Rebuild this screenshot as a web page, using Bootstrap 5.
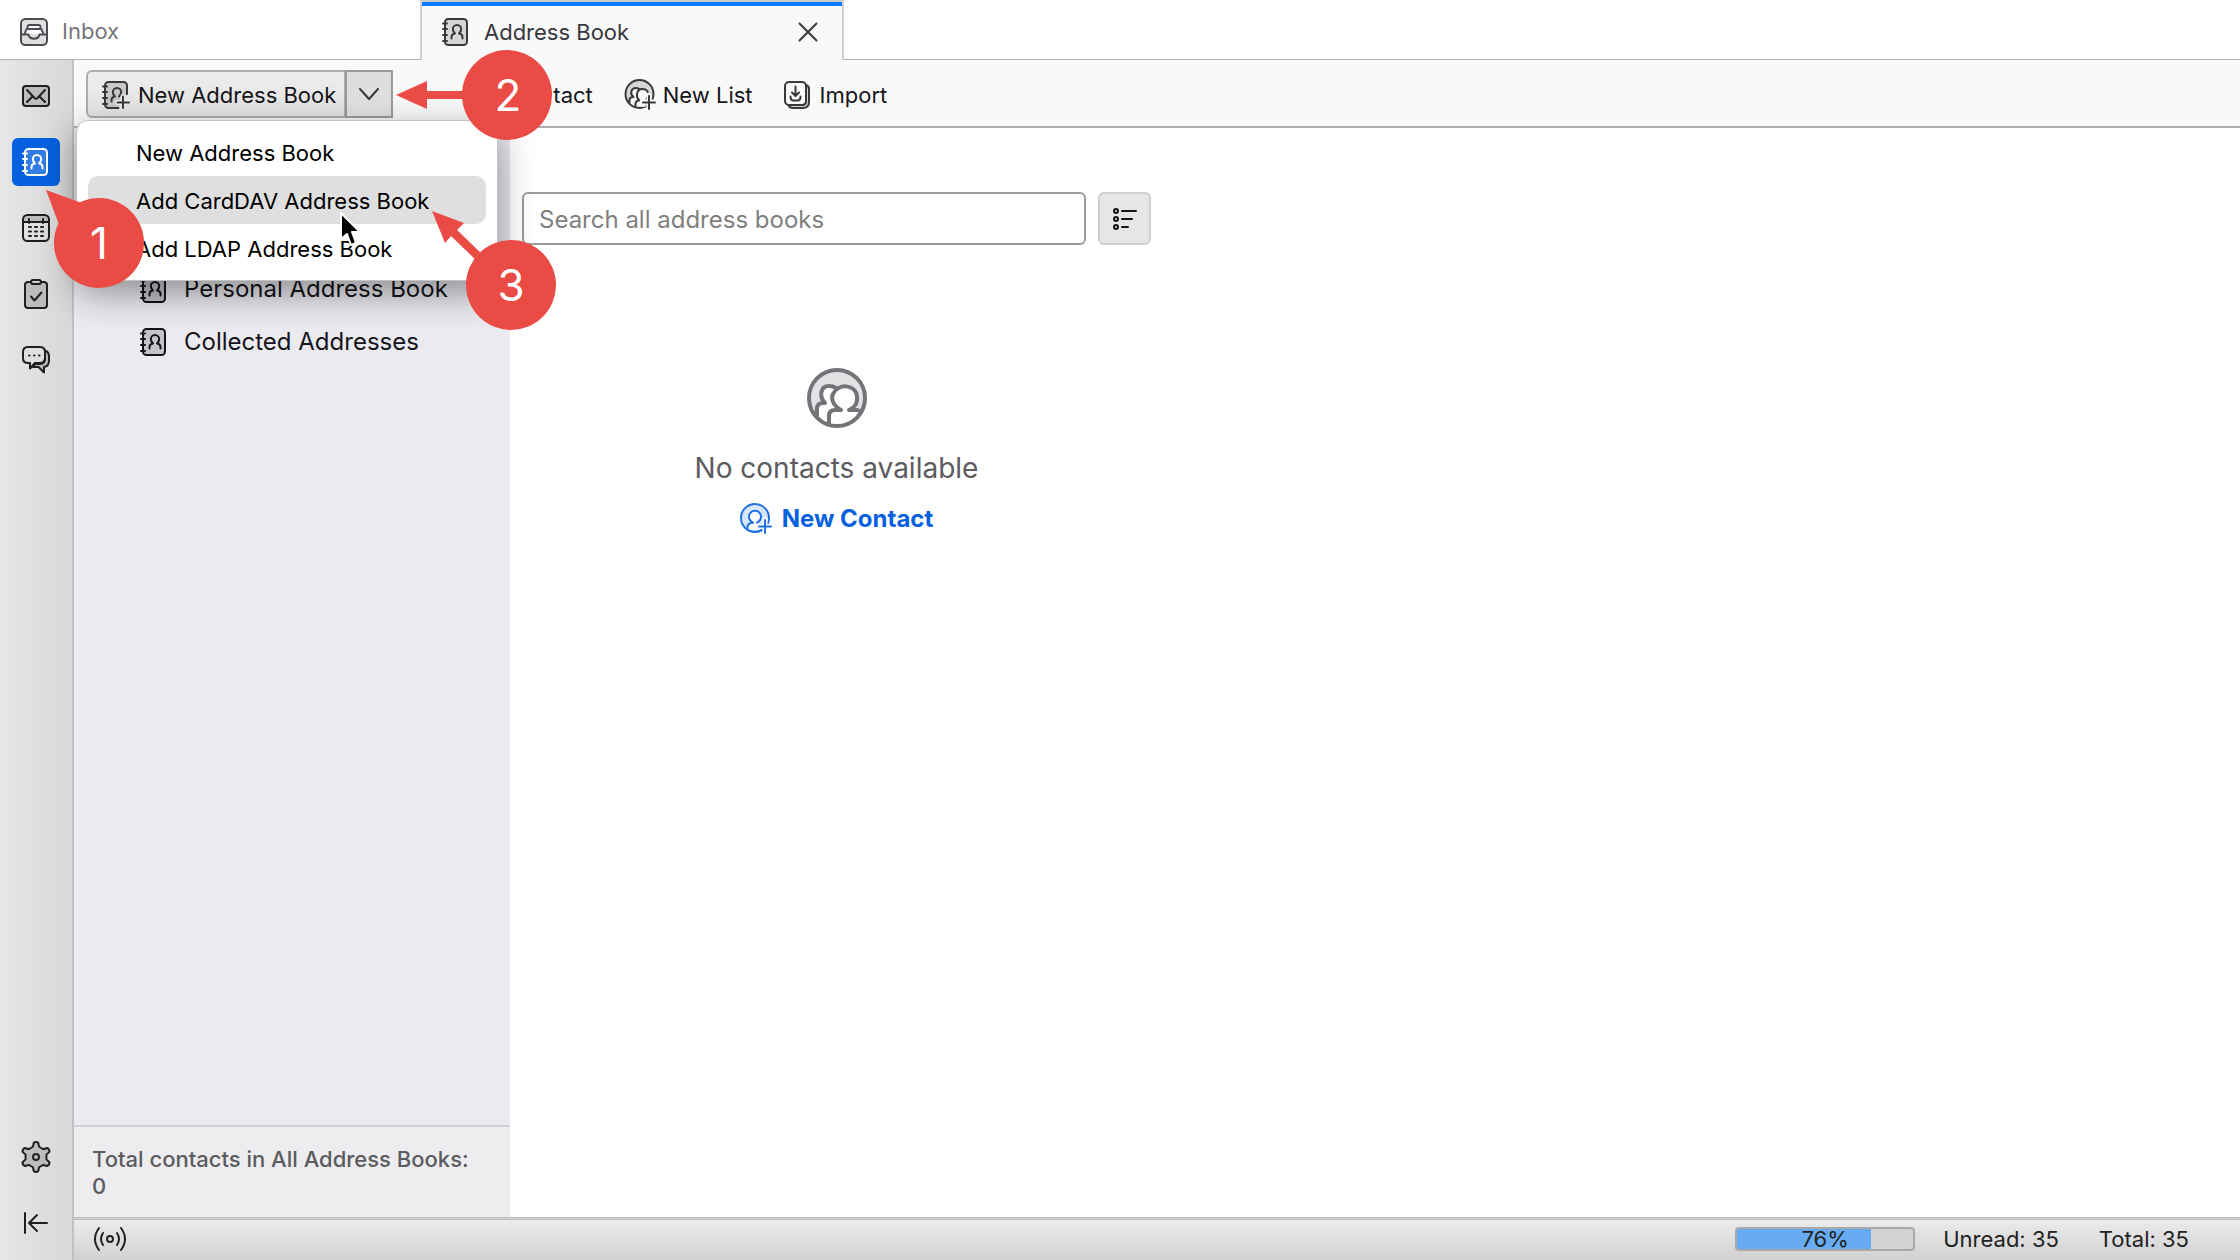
<!DOCTYPE html>
<html lang="en">
<head>
<meta charset="utf-8">
<meta name="viewport" content="width=device-width, initial-scale=1">
<title>Address Book</title>
<link href="https://cdn.jsdelivr.net/npm/bootstrap@5.3.0/dist/css/bootstrap.min.css" rel="stylesheet">
<style>
  body { font-family: Inter, "Liberation Sans", sans-serif; font-size: 22px; line-height: 27px; color: #15141a; background: #fff; overflow: hidden; }
  svg { display: block; flex: none; fill: none; stroke: currentColor; stroke-width: 2; stroke-linecap: round; stroke-linejoin: round; }
  button { color: inherit; }
  .shade { fill: currentColor; fill-opacity: .18; }
  .tab-strip { height: 60px; }
  .tab-item { width: 422px; padding: 4px 20px 0; border-bottom: 1px solid #b3b3b3; border-right: 2px solid #ccc; color: #75757a; gap: 14px; background: #fff; }
  .tab-item svg { color: #4b4b52; }
  .tab-item.is-active { background: #f9f9f9; border-top: 2px solid #ccc; border-bottom: 0; color: #38383d; position: relative; padding-top: 2px; gap: 14px; }
  .tab-item.is-active::before { content: ""; position: absolute; left: 0; right: 0; top: 0; height: 4px; background: #0a78ff; }
  .tab-item.is-active svg { color: #38383d; }
  .tab-rest { border-bottom: 1px solid #b3b3b3; }
  .plain-btn { background: none; border: 0; padding: 0; }
  .rail { width: 74px; padding: 12px 0 13px; background: linear-gradient(90deg, #e6e6e6, #d8d8d8); border-right: 2px solid #c1c1c1; gap: 18px; }
  .rail button { width: 48px; height: 48px; border-radius: 6px; color: #1f1f22; }
  .rail button.is-active { background: #0561e0; color: #fff; }
  .rail .is-active .shade { fill-opacity: .25; }
  .tool-strip { height: 68px; padding: 2px 12px 0; background: #f9f9f9; border-bottom: 2px solid #adadad; }
  .tool-strip svg { color: #38383d; }
  .split-btn .btn { height: 48px; border: 2px solid #adadad; font-size: 22px; line-height: 27px; color: #15141a; background: linear-gradient(#ededed, #e3e3e3); border-radius: 6px; }
  .split-btn .btn-main { padding: 2px 8px 0 14px; gap: 8px; border-top-right-radius: 0; border-bottom-right-radius: 0; }
  .split-btn .btn-open { width: 48px; padding: 0; border-color: #9b9b9b; background: linear-gradient(#dcdcdc, #e2e2e2); border-top-left-radius: 0; border-bottom-left-radius: 0; }
  .split-btn .dropdown-menu { top: 50px; left: -10px; width: 422px; padding: 7px 11px 8px; border: 1px solid #c4c4c4; border-radius: 12px; font-size: 22px; box-shadow: 0 12px 36px rgba(0,0,0,.4); }
  .split-btn .dropdown-item { height: 48px; padding: 0 48px; line-height: 50px; border-radius: 10px; color: #000; }
  .split-btn .dropdown-item.is-hover { background: #dfdfdf; }
  .tool-group { margin-left: 160px; gap: 31px; padding-top: 2px; }
  .tool-group button { gap: 7px; }
  .tool-group button + button + button { gap: 8px; }
  .book-pane { width: 436px; background: #eaeaef; }
  .book-list { padding: 134px 0 0 66px; font-size: 24px; }
  .book-list a { height: 53px; gap: 16px; color: #15141a; }
  .book-list svg { color: #15141a; }
  .book-total { height: 92px; padding: 19px 36px 0 18px; background: #ededef; border-top: 2px solid #d1d1d5; color: #5b5b60; font-weight: 500; }
  .list-pane { width: 653px; padding: 64px 12px 0; }
  .search-box { height: 53px; border: 2px solid #9b9b9b; border-radius: 6px; padding: 2px 15px 0; font-size: 24px; }
  .search-box::placeholder { color: #7f7f80; }
  .view-btn { width: 53px; height: 53px; background: #e6e6e6; border: 2px solid #cfcfcf; border-radius: 6px; }
  .empty-note { padding-top: 123px; color: #5b5b60; }
  .empty-note svg { color: #737378; }
  .empty-note p { font-size: 28px; line-height: 34px; margin: 23px 0 17px; }
  .empty-note .new-link { font-size: 24px; line-height: 34px; font-weight: 700; color: #0561e0; gap: 10px; }
  .empty-note .new-link svg { color: #1f72e3; }
  .status-strip { height: 43px; padding: 0 51px 2px 19px; background: linear-gradient(#ebebeb, #d1d1d1); border-top: 3px double #bdbdbd; gap: 40px; color: #222; }
  .quota { width: 180px; height: 24px; border: 2px solid #a9a9a9; border-radius: 4px; background: #d2d2d2; position: relative; margin-right: -12px; }
  .quota .progress-bar { background: #67abf3; }
  .quota span { position: absolute; inset: 0; text-align: center; line-height: 21px; color: #222; font-size: 22px; }
  .callouts { position: absolute; left: 0; top: 0; z-index: 1100; pointer-events: none; stroke: none; fill: #ea4b45; }
  .callouts text { fill: #fff; font: 44px Inter, "Liberation Sans", sans-serif; text-anchor: middle; }
</style>
</head>
<body class="vh-100 d-flex flex-column position-relative">

<svg width="0" height="0" class="position-absolute" aria-hidden="true">
  <defs>
    <symbol id="i-book" viewBox="0 0 28 28">
      <rect class="shade" x="3" y="1" width="22" height="26" rx="3.5"/>
      <path d="M1 5.5h4M1 11h4M1 17h4M1 23h4"/>
      <path d="M9.500 20.500v-1.500c0-2.500 1.200-3.300 3.500-3.600-1.500-1.300-2.200-2.700-2.200-4.300a4.200 4.200 0 0 1 8.400 0c0 1.600-.7 3-2.200 4.300 2.300.3 3.500 1.100 3.500 3.600v1.500"/>
    </symbol>
    <symbol id="i-book-add" viewBox="0 0 28 28">
      <path class="shade" d="M3 4.500a3.500 3.500 0 0 1 3.500-3.500h15a3.500 3.500 0 0 1 3.500 3.500v10l-8 7v5.500h-10.500a3.500 3.500 0 0 1-3.500-3.500z" stroke="none"/>
      <path d="M25 13V4.500a3.500 3.500 0 0 0-3.500-3.500h-15a3.500 3.500 0 0 0-3.500 3.500v19a3.500 3.500 0 0 0 3.500 3.500h10"/>
      <path d="M1 5.500h4M1 11h4M1 17h4M1 23h4"/>
      <path d="M9.500 20.500v-1.500c0-2.500 1.200-3.300 3.500-3.600-1.500-1.300-2.200-2.700-2.200-4.300a4.200 4.200 0 0 1 8.400 0c0 1.600-.7 3-2.200 4.300"/>
      <path d="M21 15.500v12M15 21.500h12" stroke="#ebebeb" stroke-width="5"/>
      <path d="M21 15.500v11.500M15.500 21.500h11.500"/>
    </symbol>
    <symbol id="i-person-add" viewBox="0 0 32 32">
      <circle class="shade" cx="15" cy="15" r="14"/>
      <path fill="#fff" d="M7 26.500v-2.500c0-3 2-4 6-4.300-3-1.700-4-3.700-4-5.900a6 6 0 0 1 12 0c0 2.200-1 4.200-4 5.900l3 .5v8z" stroke="none"/>
      <path d="M7.500 26v-2c0-3 2-4 5.500-4.300-3-1.700-4-3.700-4-5.900a6 6 0 0 1 12 0c0 2.200-1 4.200-4 5.900M7 26.500q7 4.500 15 .5"/>
      <path d="M25 17v14M18 23.500h14" stroke="#fff" stroke-width="5"/>
      <path d="M25 17v13M19 23.500h12"/>
    </symbol>
    <symbol id="i-people-add" viewBox="0 0 32 32">
      <circle class="shade" cx="15.500" cy="15" r="14"/>
      <path fill="#f9f9f9" d="M6 24v-2c0-3 1-4 4-4-4-4-2-9 2-9 2 0 3 1 4 2 3-3 8-2 8.500 3 .2 3-1 4-3 6v8l-10-1z" stroke="none"/>
      <path d="M5.500 24v-3c0-2 1-3 4-3-4.500-4-1.800-9 2.500-9 1 0 2 .3 3 .8M11.500 28v-3c0-2.500 1-3.500 4-3.500-4-3-3.500-11.500 3-11.500s7 7 4 10.500"/>
      <path d="M25 16v14M18 23h14" stroke="#f9f9f9" stroke-width="5"/>
      <path d="M25 17v13M19 23.500h12"/>
    </symbol>
  </defs>
</svg>

<header class="tab-strip d-flex">
  <a href="#" class="tab-item d-flex align-items-center text-decoration-none">
    <svg width="28" height="28" viewBox="0 0 28 28"><rect class="shade" x="1" y="1" width="26" height="26" rx="4.500"/><path fill="#fff" stroke="none" d="M5 16l1.500-8 3-1.500h9l3 1.500 1.500 8z"/><path d="M2 16.500h6.500c1 5.500 10 5.500 11 0h6.500M5 15l1.500-4h15l1.500 4M7.500 10.500V9c0-1.200.8-2 2-2h9c1.200 0 2 .8 2 2v1.500"/></svg>
    <span>Inbox</span>
  </a>
  <div class="tab-item is-active d-flex align-items-center">
    <svg width="28" height="28"><use href="#i-book"/></svg>
    <span class="flex-grow-1">Address Book</span>
    <button type="button" class="plain-btn me-1" aria-label="Close tab"><svg width="20" height="20" viewBox="0 0 20 20"><path d="M1.500 1.500l17 17M18.500 1.500l-17 17"/></svg></button>
  </div>
  <div class="tab-rest flex-grow-1"></div>
</header>

<div class="d-flex flex-grow-1">
  <nav class="rail d-flex flex-column align-items-center" aria-label="Spaces">
    <button type="button" class="plain-btn d-flex align-items-center justify-content-center" aria-label="Mail"><svg width="28" height="22" viewBox="0 0 28 22"><rect class="shade" x="1" y="1" width="26" height="20" rx="3"/><path d="M5 5l7.500 8c1 1 2 1 3 0l7.500-8M5 17l5-5M23 17l-5-5"/></svg></button>
    <button type="button" class="plain-btn is-active d-flex align-items-center justify-content-center" aria-label="Address Book"><svg width="28" height="28"><use href="#i-book"/></svg></button>
    <button type="button" class="plain-btn d-flex align-items-center justify-content-center" aria-label="Calendar"><svg width="28" height="28" viewBox="0 0 28 28"><path class="shade" stroke="none" d="M1 8V5.500a4.500 4.500 0 0 1 4.500-4.500h17a4.500 4.500 0 0 1 4.500 4.500V8z"/><rect x="1" y="1" width="26" height="26" rx="4.500"/><path d="M1 8h26M7 5v4M21 5v4M7 13h2M13 13h2M19 13h2M7 17.500h2M13 17.500h2M19 17.500h2M7 22h2M13 22h2M19 22h2"/></svg></button>
    <button type="button" class="plain-btn d-flex align-items-center justify-content-center" aria-label="Tasks"><svg width="26" height="30" viewBox="0 0 26 30"><path class="shade" d="M8 3H4.500A3 3 0 0 0 2 6v20a3 3 0 0 0 3 3h16a3 3 0 0 0 3-3V6a3 3 0 0 0-2.500-3H18"/><rect x="8" y="1" width="10" height="4" rx="2"/><path d="M8 17.500l3.500 4 7-8"/></svg></button>
    <button type="button" class="plain-btn d-flex align-items-center justify-content-center" aria-label="Chat"><svg width="28" height="28" viewBox="0 0 28 28"><path class="shade" d="M23 4.500c3 1 4 3 4 6v4c0 4-2 6-5 6.500v5.500l-5.500-5.500H11l2-3h5c4 0 5-3 5-6z"/><path d="M6 1h12c3 0 5 2 5 5v6c0 3-2 5-5 5h-5l-5 5.500V17H6c-3 0-5-2-5-5V6c0-3 2-5 5-5z"/><path d="M7 9.500h.5M12 9.500h.5M17 9.500h.5"/></svg></button>
    <button type="button" class="plain-btn d-flex align-items-center justify-content-center mt-auto" aria-label="Settings"><svg width="32" height="32" viewBox="-16 -16 32 32"><path class="shade" d="M-3.500-10Q-2.600-11-2.600-12.500C-2.600-15.800 2.600-15.800 2.600-12.500Q2.600-11 3.500-10L6.900-8Q8-8 9.500-8.500C12.400-10 15-6 12.200-4Q10.600-3 10.400-2V2Q10.600 3 12.200 4C15 6 12.400 10 9.500 8.500Q8 8 6.900 8L3.500 10Q2.600 11 2.600 12.500C2.600 15.800-2.600 15.800-2.600 12.500Q-2.600 11-3.500 10L-6.900 8Q-8 8-9.500 8.500C-12.400 10-15 6-12.200 4Q-10.600 3-10.400 2V-2Q-10.600-3-12.200-4C-15-6-12.400-10-9.500-8.500Q-8-8-6.900-8z"/><circle r="3"/></svg></button>
    <button type="button" class="plain-btn d-flex align-items-center justify-content-center" aria-label="Collapse"><svg width="24" height="22" viewBox="0 0 24 22"><path d="M1 1v20M23 11H5M13 3l-8 8 8 8"/></svg></button>
  </nav>

  <div class="flex-grow-1 d-flex flex-column">
    <div class="tool-strip d-flex align-items-center">
      <div class="btn-group split-btn">
        <button type="button" class="btn btn-main d-flex align-items-center"><svg width="28" height="28"><use href="#i-book-add"/></svg>New Address Book</button>
        <button type="button" class="btn btn-open d-flex align-items-center justify-content-center" aria-label="More address book types" aria-expanded="true"><svg width="20" height="12" viewBox="0 0 20 12"><path d="M1 1l9 10 9-10"/></svg></button>
        <ul class="dropdown-menu show">
          <li><button type="button" class="dropdown-item">New Address Book</button></li>
          <li><button type="button" class="dropdown-item is-hover">Add CardDAV Address Book</button></li>
          <li><button type="button" class="dropdown-item">Add LDAP Address Book</button></li>
        </ul>
      </div>
      <div class="tool-group d-flex align-items-center">
        <button type="button" class="plain-btn" aria-label="New Contact">tact</button>
        <button type="button" class="plain-btn d-flex align-items-center"><svg width="32" height="32"><use href="#i-people-add"/></svg>New List</button>
        <button type="button" class="plain-btn d-flex align-items-center"><svg width="28" height="28" viewBox="0 0 28 28"><path class="shade" d="M22 4c2 .5 3 1.500 3 4v13c0 4-2 6-6 6H9c-2.500 0-4-1-4.500-3H18c3 0 4-1.500 4-4z"/><rect x="1" y="1" width="21" height="23" rx="4" fill="#f9f9f9"/><path d="M11.500 5.500v9M8 11.500l3.500 3.500 3.500-3.500M6.500 15.500c0 3 1 4 3 4h4c2 0 3-1 3-4"/></svg>Import</button>
      </div>
    </div>

    <div class="d-flex flex-grow-1">
      <aside class="book-pane d-flex flex-column">
        <nav class="book-list flex-grow-1" aria-label="Address books">
          <a href="#" class="d-flex align-items-center text-decoration-none"><svg width="28" height="28"><use href="#i-book"/></svg>Personal Address Book</a>
          <a href="#" class="d-flex align-items-center text-decoration-none"><svg width="28" height="28"><use href="#i-book"/></svg>Collected Addresses</a>
        </nav>
        <div class="book-total">Total contacts in All Address Books: 0</div>
      </aside>
      <main class="list-pane">
        <div class="d-flex gap-2">
          <input type="search" class="search-box flex-grow-1 me-1" placeholder="Search all address books" aria-label="Search all address books">
          <button type="button" class="view-btn d-flex align-items-center justify-content-center p-0" aria-label="List display options"><svg width="24" height="24" viewBox="0 0 24 24"><circle cx="3" cy="4" r="2"/><circle cx="3" cy="12" r="2"/><circle cx="3" cy="20" r="2"/><path d="M9 4h14M9 12h10M9 20h6"/></svg></button>
        </div>
        <div class="empty-note d-flex flex-column align-items-center">
          <svg width="60" height="60" viewBox="0 0 60 60">
            <circle cx="30" cy="30" r="28" fill="#e2e2e4" stroke="none"/>
            <path fill="#fff" stroke="none" d="M10 50v-8q0-7 5-7h5C12 29 13 18 22 18q4 0 6 2c10-8 24 1 22 12q-1 6-5 10h5q3 0 5 2Q46 60 30 58 18 58 10 50z"/>
            <g stroke-width="4"><path d="M10 48v-7q0-6 6-6h2C12 29 13 18 22 18q4 0 7 2M22 55v-7q0-6 6-6h6c-9-5-10-12-8-16 5-11 22-10 24 2 1 7-3 12-8 14h8q2 0 4 2"/><circle cx="30" cy="30" r="28"/></g>
          </svg>
          <p>No contacts available</p>
          <a href="#" class="new-link d-flex align-items-center text-decoration-none"><svg width="32" height="32"><use href="#i-person-add"/></svg>New Contact</a>
        </div>
      </main>
    </div>

    <footer class="status-strip d-flex align-items-center">
      <svg class="me-auto" width="34" height="26" viewBox="0 0 34 26"><circle cx="17" cy="13" r="3"/><path d="M10 7q-4 6 0 12M24 7q4 6 0 12M6 2q-8 11 0 22M28 2q8 11 0 22"/></svg>
      <div class="progress quota" role="progressbar" aria-valuenow="76" aria-valuemin="0" aria-valuemax="100" aria-label="Quota"><div class="progress-bar" style="width: 76%"></div><span>76%</span></div>
      <span>Unread: 35</span>
      <span>Total: 35</span>
    </footer>
  </div>
</div>

<svg class="callouts" width="600" height="360" viewBox="0 0 600 360">
  <path d="M341 213v26l6-5 4 11 5-2-4-11h8z" fill="#000" stroke="#fff" stroke-width="2"/>
  <circle cx="99" cy="243" r="45"/><path d="M46 190l36 13-22 24z"/><text x="99" y="259">1</text>
  <circle cx="507" cy="95" r="45"/><path d="M396 95l31-14v10h40v8h-40v10z"/><text x="508" y="111">2</text>
  <circle cx="511" cy="285" r="45"/><path d="M432 211l32 12-7 7 27 26-6 6-27-26-6 7z"/><text x="511" y="301">3</text>
</svg>

<script src="https://cdn.jsdelivr.net/npm/bootstrap@5.3.0/dist/js/bootstrap.bundle.min.js"></script>
</body>
</html>
